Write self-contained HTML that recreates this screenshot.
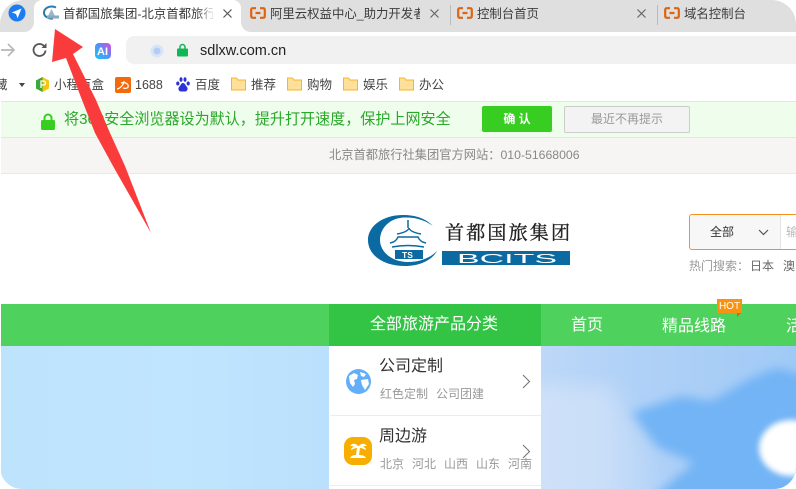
<!DOCTYPE html>
<html lang="zh"><head><meta charset="utf-8"><style>
html,body{margin:0;padding:0;background:#fff}
#p{position:relative;width:796px;height:489px;overflow:hidden;background:#fff;border-radius:0 24px 22px 22px;font-family:"Liberation Sans","Noto Sans CJK SC",sans-serif;color:#333}
#p div,#p span.a,#p svg{position:absolute}
.t{position:absolute;white-space:nowrap;line-height:20px}
</style></head><body><div id="p">
<!-- tab strip -->
<div style="left:0;top:0;width:796px;height:32px;background:#dfdfdf;border-radius:0 24px 0 0"></div>
<div style="left:34px;top:0;width:207px;height:32px;background:#fff;border-radius:8px 8px 0 0"></div>
<div style="left:0;top:0;width:34px;height:32px;background:#fff"></div>
<div style="left:0;top:0;width:34px;height:32px;background:#dfdfdf;border-radius:24px 0 10px 0"></div>
<div style="left:241px;top:24px;width:10px;height:8px;background:#fff"></div>
<div style="left:241px;top:22px;width:12px;height:10px;background:#dfdfdf;border-radius:0 0 0 10px"></div>
<svg style="left:8px;top:4px" width="18" height="18" viewBox="0 0 18 18"><circle cx="9" cy="9" r="8.500" fill="#1c7cf0"/><path d="M13.500 4.500L3.800 8.500 8 10l1.600 4.200z" fill="#fff"/></svg>
<svg style="left:43px;top:5px" width="17" height="16" viewBox="0 0 17 16"><path d="M13 2.500C9 .5 2 1.500 1 7c-.5 4 4 7 9 6.500" fill="none" stroke="#2a7ba8" stroke-width="2"/><path d="M5 11l3.500-7 3.500 7z" fill="#9ab8cc"/><rect x="4" y="10.500" width="12" height="3" fill="#8aa9bd"/></svg>
<span class="t" style="left:63px;top:4px;font-size:12.400px;color:#3a3a3a;width:150px;overflow:hidden">首都国旅集团-北京首都旅行社</span>
<div style="left:196px;top:4px;width:20px;height:22px;background:linear-gradient(90deg,rgba(255,255,255,0),#fff)"></div>
<svg style="left:223px;top:9px" width="9" height="9"><path d="M.5.5l8 8M8.500.5l-8 8" stroke="#555" stroke-width="1.200"/></svg>
<svg style="left:250px;top:7px" width="16" height="12" viewBox="0 0 16 12"><path d="M6 1.200H3Q1.200 1.200 1.200 3v6q0 1.800 1.800 1.800h3M10 1.200h3q1.800 0 1.800 1.800v6q0 1.800-1.800 1.800h-3M5.500 6h5" fill="none" stroke="#dd6410" stroke-width="2.200"/></svg>
<span class="t" style="left:270px;top:4px;font-size:12.400px;color:#3c3c3c;width:150px;overflow:hidden">阿里云权益中心_助力开发者</span>
<svg style="left:430px;top:9px" width="9" height="9"><path d="M.5.5l8 8M8.500.5l-8 8" stroke="#666" stroke-width="1.200"/></svg>
<div style="left:450px;top:5px;width:1px;height:20px;background:#bbb"></div>
<svg style="left:457px;top:7px" width="16" height="12" viewBox="0 0 16 12"><path d="M6 1.200H3Q1.200 1.200 1.200 3v6q0 1.800 1.800 1.800h3M10 1.200h3q1.800 0 1.800 1.800v6q0 1.800-1.800 1.800h-3M5.500 6h5" fill="none" stroke="#dd6410" stroke-width="2.200"/></svg>
<span class="t" style="left:477px;top:4px;font-size:12.400px;color:#3c3c3c">控制台首页</span>
<svg style="left:637px;top:9px" width="9" height="9"><path d="M.5.5l8 8M8.500.5l-8 8" stroke="#666" stroke-width="1.200"/></svg>
<div style="left:657px;top:5px;width:1px;height:20px;background:#bbb"></div>
<svg style="left:664px;top:7px" width="16" height="12" viewBox="0 0 16 12"><path d="M6 1.200H3Q1.200 1.200 1.200 3v6q0 1.800 1.800 1.800h3M10 1.200h3q1.800 0 1.800 1.800v6q0 1.800-1.800 1.800h-3M5.500 6h5" fill="none" stroke="#dd6410" stroke-width="2.200"/></svg>
<span class="t" style="left:684px;top:4px;font-size:12.400px;color:#3c3c3c">域名控制台</span>
<!-- toolbar -->
<svg style="left:0;top:41px" width="16" height="18" viewBox="0 0 16 18"><path d="M1 9h13M8 3l6 6-6 6" fill="none" stroke="#b8b8b8" stroke-width="1.700"/></svg>
<svg style="left:32px;top:42px" width="16" height="16" viewBox="0 0 16 16"><path d="M13.500 8.500A6 6 0 1 1 12 4" fill="none" stroke="#555" stroke-width="1.800"/><path d="M9.500 6h5V1z" fill="#555"/></svg>
<svg style="left:95px;top:43px" width="16" height="16" viewBox="0 0 16 16"><defs><linearGradient id="g" x1="0" y1="1" x2="1" y2="0"><stop offset="0" stop-color="#14c8ff"/><stop offset=".55" stop-color="#5a8cf5"/><stop offset="1" stop-color="#f040d8"/></linearGradient></defs><rect width="16" height="16" rx="4" fill="url(#g)"/><text x="2" y="12" font-size="11" font-weight="bold" fill="#fff" font-family="Liberation Sans">AI</text></svg>
<div style="left:126px;top:36px;width:670px;height:28px;background:#f1f1f1;border-radius:8px 0 0 8px"></div>
<svg style="left:150px;top:44px" width="14" height="14"><circle cx="7" cy="7" r="6.500" fill="#d8e4f8"/><circle cx="7" cy="7" r="3.500" fill="#b4ccf4"/></svg>
<svg style="left:177px;top:43px" width="11" height="14" viewBox="0 0 11 14"><path d="M3 6V4a2.500 2.500 0 0 1 5 0v2" fill="none" stroke="#11b656" stroke-width="1.500"/><rect y="5.500" width="11" height="8" rx="1" fill="#11b656"/></svg>
<span class="t" style="left:200px;top:41px;font-size:14.500px;color:#222">sdlxw.com.cn</span>
<!-- bookmarks -->
<span class="t" style="left:-5px;top:75px;font-size:12.500px;color:#444">藏</span>
<div style="left:19px;top:83px;border:3.500px solid transparent;border-top:4px solid #444"></div>
<svg style="left:36px;top:77px" width="13" height="15" viewBox="0 0 13 15"><path d="M6.500 0L13 3.500v8L6.500 15 0 11.500v-8z" fill="#f3c613"/><path d="M6.500 0L0 3.500v8L6.500 15z" fill="#3aa83c"/><path d="M5 11V4h2.500a2 2 0 0 1 0 4H5" fill="none" stroke="#fff" stroke-width="1.300"/></svg>
<span class="t" style="left:54px;top:75px;font-size:12.500px;color:#444">小程百盒</span>
<svg style="left:115px;top:77px" width="16" height="16" viewBox="0 0 16 16"><rect width="16" height="16" rx="2" fill="#f26a0c"/><path d="M2 12C6 11 9 7 9 4M6 6c3-1 6 0 7 2 1 3-2 4-5 3" fill="none" stroke="#fff" stroke-width="1.200"/></svg>
<span class="t" style="left:135px;top:75px;font-size:12.500px;color:#444">1688</span>
<svg style="left:176px;top:77px" width="14" height="15" viewBox="0 0 14 15"><g fill="#2b32d6"><ellipse cx="1.800" cy="6.500" rx="1.600" ry="2"/><ellipse cx="5" cy="2.500" rx="1.500" ry="2.300"/><ellipse cx="9" cy="2.500" rx="1.500" ry="2.300"/><ellipse cx="12.200" cy="6.500" rx="1.600" ry="2"/><path d="M7 6c-2 0-2 2-4 4-1.500 2 0 4.500 2 4.500h4c2 0 3.500-2.500 2-4.500-2-2-2-4-4-4z"/></g></svg>
<span class="t" style="left:195px;top:75px;font-size:12.500px;color:#444">百度</span>
<svg style="left:231px;top:77px" width="15" height="14" viewBox="0 0 15 14"><path d="M.5 13V1h5l1.500 2h7.500v10z" fill="#ffe09b" stroke="#f6b52a"/></svg>
<span class="t" style="left:251px;top:75px;font-size:12.500px;color:#444">推荐</span>
<svg style="left:287px;top:77px" width="15" height="14" viewBox="0 0 15 14"><path d="M.5 13V1h5l1.500 2h7.500v10z" fill="#ffe09b" stroke="#f6b52a"/></svg>
<span class="t" style="left:307px;top:75px;font-size:12.500px;color:#444">购物</span>
<svg style="left:343px;top:77px" width="15" height="14" viewBox="0 0 15 14"><path d="M.5 13V1h5l1.500 2h7.500v10z" fill="#ffe09b" stroke="#f6b52a"/></svg>
<span class="t" style="left:363px;top:75px;font-size:12.500px;color:#444">娱乐</span>
<svg style="left:399px;top:77px" width="15" height="14" viewBox="0 0 15 14"><path d="M.5 13V1h5l1.500 2h7.500v10z" fill="#ffe09b" stroke="#f6b52a"/></svg>
<span class="t" style="left:419px;top:75px;font-size:12.500px;color:#444">办公</span>
<!-- 360 bar -->
<div style="left:1px;top:101px;width:795px;height:35px;background:#effdec;border-top:1px solid #e2e8e0;border-bottom:1px solid #dfe8dd"></div>
<svg style="left:41px;top:113px" width="14" height="17" viewBox="0 0 14 17"><path d="M3.500 8V5a3.500 3.500 0 0 1 7 0v3" fill="none" stroke="#36cf20" stroke-width="2"/><rect y="7" width="14" height="10" rx="1.500" fill="#36cf20"/></svg>
<span class="t" style="left:64px;top:110px;font-size:15.070px;color:#2aa82a">将360安全浏览器设为默认，提升打开速度，保护上网安全</span>
<div style="left:482px;top:106px;width:70px;height:26px;background:#37ce21;border-radius:2px;color:#fff;font-size:12px;font-weight:bold;text-align:center;line-height:26px">确 认</div>
<div style="left:564px;top:106px;width:124px;height:25px;background:#f3f3f3;border:1px solid #ccc;border-radius:2px;color:#999;font-size:12px;text-align:center;line-height:25px">最近不再提示</div>
<!-- top site bar -->
<div style="left:1px;top:138px;width:795px;height:35px;background:#f7f5f4;border-bottom:1px solid #e8e8e8"></div>
<span class="t" style="left:329px;top:145px;font-size:12.250px;color:#888">北京首都旅行社集团官方网站：010-51668006</span>
<!-- logo -->
<svg style="left:360px;top:210px" width="215" height="62" viewBox="360 210 215 62">
<path d="M433 226C425 218 415 215 403 215 383 215 368 226 368 240 368 255 383 266 405 266 420 266 432 260 437 251 430 258 420 262 408 262 392 262 380 252 380 240 380 228 390 218 404 217.500 415 217 425 220 433 226Z" fill="#0a6aa1"/>
<path d="M408 220v8M397 234q11-2 12-6q1 4 12 6M390 243q6-1 8-6h20q2 5 8 6M392 247q16-3 32 0" fill="none" stroke="#0a6aa1" stroke-width="1.500"/>
<rect x="395" y="250" width="28" height="9" fill="#0a6aa1"/>
<text x="402" y="258" font-size="8.500" font-weight="bold" fill="#fff" font-family="Liberation Sans">TS</text>
<text x="445" y="239" font-size="19" fill="#222" stroke="#222" stroke-width=".35" font-family="Noto Serif CJK SC,serif" textLength="125">首都国旅集团</text>
<rect x="442" y="251" width="128" height="14" fill="#0a6aa1"/>
<text x="457" y="263" font-size="13" fill="#fff" font-family="Liberation Sans" textLength="100" lengthAdjust="spacingAndGlyphs">BCITS</text>
</svg>
<!-- search -->
<div style="left:689px;top:214px;width:120px;height:34px;border:1px solid #f5921e;border-radius:3px;background:#fff"></div>
<div style="left:690px;top:215px;width:90px;height:34px;background:#f7f7f7;border-right:1px solid #e5e5e5;border-radius:3px 0 0 3px"></div>
<span class="t" style="left:710px;top:222px;font-size:12px;color:#333">全部</span>
<svg style="left:758px;top:229px" width="11" height="7"><path d="M1 1l4.500 4.500L10 1" fill="none" stroke="#555" stroke-width="1.200"/></svg>
<span class="t" style="left:786px;top:222px;font-size:12px;color:#bbb">输</span>
<span class="t" style="left:689px;top:256px;font-size:12px;color:#999">热门搜索：</span>
<span class="t" style="left:750px;top:256px;font-size:12px;color:#666">日本</span>
<span class="t" style="left:783px;top:256px;font-size:12px;color:#666">澳</span>
<!-- nav -->
<div style="left:1px;top:304px;width:795px;height:42px;background:#4fd15d"></div>
<div style="left:329px;top:304px;width:212px;height:42px;background:#33c445"></div>
<span class="t" style="left:370px;top:315px;font-size:16px;color:#fff">全部旅游产品分类</span>
<span class="t" style="left:571px;top:316px;font-size:16px;color:#fff">首页</span>
<span class="t" style="left:662px;top:317px;font-size:16px;color:#fff">精品线路</span>
<span class="t" style="left:786px;top:317px;font-size:16px;color:#fff">活</span>
<div style="left:717px;top:299px;width:25px;height:14px;background:#f8920f;color:#fff;font-size:10px;line-height:15px;text-align:center">HOT</div>
<div style="left:737px;top:313px;border-top:4px solid #c96f05;border-right:4px solid transparent"></div>
<!-- left sky -->
<div style="left:1px;top:346px;width:328px;height:143px;background:linear-gradient(90deg,#bee3fd,#c0e5fe 55%,#bae0fd)"></div>
<!-- right sky -->
<svg style="left:541px;top:346px" width="255" height="143" viewBox="0 0 255 143">
<defs>
<linearGradient id="s1" x1="0" x2="1" y1="0" y2="0"><stop offset="0" stop-color="#bdd8f8"/><stop offset=".3" stop-color="#b2d2f7"/><stop offset="1" stop-color="#a0caf6"/></linearGradient>
<linearGradient id="s2" x1="0" x2="1" y1="0" y2="0"><stop offset="0" stop-color="#d2e3f9" stop-opacity=".9"/><stop offset=".55" stop-color="#cfe1f8" stop-opacity=".8"/><stop offset="1" stop-color="#cfe1f8" stop-opacity="0"/></linearGradient>
<filter id="b1"><feGaussianBlur stdDeviation="5"/></filter><filter id="b2"><feGaussianBlur stdDeviation="9"/></filter><filter id="b3"><feGaussianBlur stdDeviation="3"/></filter>
</defs>
<rect width="255" height="143" fill="url(#s1)"/>
<path d="M89 67L140 50 170 55 210 32 235 22 270 30V160H100L153 117 116 101Z" fill="#72b4f5" filter="url(#b1)"/>
<path d="M-20 40H70L110 110 130 160H-20Z" fill="url(#s2)" filter="url(#b2)"/>
<ellipse cx="250" cy="102" rx="32" ry="28" fill="#fff" filter="url(#b3)"/>
</svg>
<!-- category panel -->
<div style="left:329px;top:346px;width:212px;height:143px;background:#fff"></div>
<div style="left:330px;top:415px;width:211px;height:1px;background:#ececec"></div>
<div style="left:330px;top:485px;width:211px;height:1px;background:#ececec"></div>
<svg style="left:346px;top:369px" width="25" height="25" viewBox="0 0 25 25"><circle cx="12.500" cy="12.500" r="12.500" fill="#63aef8"/><path d="M3 7l5-3 4 2-1 4-3 1 1 4-2 3-3-4zM14 3l6 2-2 3-3-1zM15 11l7-1 1 5-4 6-3-5z" fill="#fff"/></svg>
<span class="t" style="left:379px;top:357px;font-size:16px;color:#333">公司定制</span>
<span class="t" style="left:380px;top:384px;font-size:12px;color:#999">红色定制</span>
<span class="t" style="left:436px;top:384px;font-size:12px;color:#999">公司团建</span>
<svg style="left:522px;top:374px" width="9" height="15"><path d="M1 1l6.500 6.500L1 14" fill="none" stroke="#777" stroke-width="1.100"/></svg>
<svg style="left:344px;top:437px" width="28" height="28" viewBox="0 0 28 28"><rect width="28" height="28" rx="9" fill="#f8ae00"/><path d="M14 9c-2-3-6-3-8 0 2 0 3 0 4 1-2 0-3 2-3 3 2-1 4-2 6-2l-1 7c-3 0-5 1-6 3h16c-1-2-3-3-7-3l1-7c2 0 4 1 6 2 0-1-1-3-3-3 1-1 2-1 4-1-2-3-6-3-8 0z" fill="#fff"/></svg>
<span class="t" style="left:379px;top:427px;font-size:16px;color:#333">周边游</span>
<span class="t" style="left:380px;top:454px;font-size:12px;color:#999">北京</span>
<span class="t" style="left:412px;top:454px;font-size:12px;color:#999">河北</span>
<span class="t" style="left:444px;top:454px;font-size:12px;color:#999">山西</span>
<span class="t" style="left:476px;top:454px;font-size:12px;color:#999">山东</span>
<span class="t" style="left:508px;top:454px;font-size:12px;color:#999">河南</span>
<svg style="left:522px;top:444px" width="9" height="15"><path d="M1 1l6.500 6.500L1 14" fill="none" stroke="#777" stroke-width="1.100"/></svg>
<!-- red arrow -->
<svg style="left:0;top:0" width="796" height="489"><polygon points="55,29 83,47 73,54 96,100 110,133 125,166 151,233 113,166 95,133 82,100 66,58 52,62" fill="#f93b3b"/></svg>
</div></body></html>
